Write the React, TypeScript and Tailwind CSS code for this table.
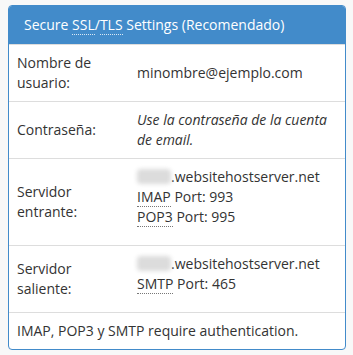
import React from "react";

function Abbr({ children, light }: { children: React.ReactNode; light?: boolean }) {
  return (
    <abbr
      className={
        light
          ? "no-underline border-b border-dotted border-white/80 cursor-help"
          : "no-underline border-b border-dotted border-[#777] cursor-help"
      }
    >
      {children}
    </abbr>
  );
}

// bloc flouté qui masque le sous-domaine
function Hidden() {
  return (
    <span className="inline-block align-middle w-[34px] h-[15px] -mt-[3px] bg-[#dcdcdc] blur-[2px] rounded-sm" />
  );
}

function Row({ label, children }: { label: React.ReactNode; children: React.ReactNode }) {
  return (
    <tr className="border-t border-[#ddd]">
      <td className="w-[120px] px-2 py-2 align-middle">{label}</td>
      <td className="px-2 py-2 align-middle">{children}</td>
    </tr>
  );
}

export default function App() {
  return (
    <div
      className="min-h-screen bg-[#f8f8f8] pt-[5px] px-2 text-[14px] leading-[20px] text-[#333]"
      style={{ fontFamily: '"Open Sans", "Noto Sans", sans-serif' }}
    >
      <div className="w-[338px] border border-[#428bca] rounded bg-white overflow-hidden">
        <div className="bg-[#428bca] text-white text-[14px] leading-[19px] px-[15px] py-[10px] h-[39px] -mt-px">
          Secure <Abbr light>SSL</Abbr>/<Abbr light>TLS</Abbr> Settings (Recomendado)
        </div>
        <table className="w-full border-collapse">
          <tbody>
            <Row label="Nombre de usuario:">minombre@ejemplo.com</Row>
            <Row label="Contraseña:">
              <em>Use la contraseña de la cuenta de email.</em>
            </Row>
            <Row label="Servidor entrante:">
              <div className="mb-[10px]">
                <Hidden />.websitehostserver.net
                <br />
                <Abbr>IMAP</Abbr> Port: 993
                <br />
                <Abbr>POP3</Abbr> Port: 995
              </div>
            </Row>
            <Row label="Servidor saliente:">
              <div className="mb-[10px]">
                <Hidden />.websitehostserver.net
                <br />
                <Abbr>SMTP</Abbr> Port: 465
              </div>
            </Row>
            <tr className="border-t border-[#ddd]">
              <td colSpan={2} className="px-2 py-2">
                IMAP, POP3 y SMTP require authentication.
              </td>
            </tr>
          </tbody>
        </table>
      </div>
    </div>
  );
}
